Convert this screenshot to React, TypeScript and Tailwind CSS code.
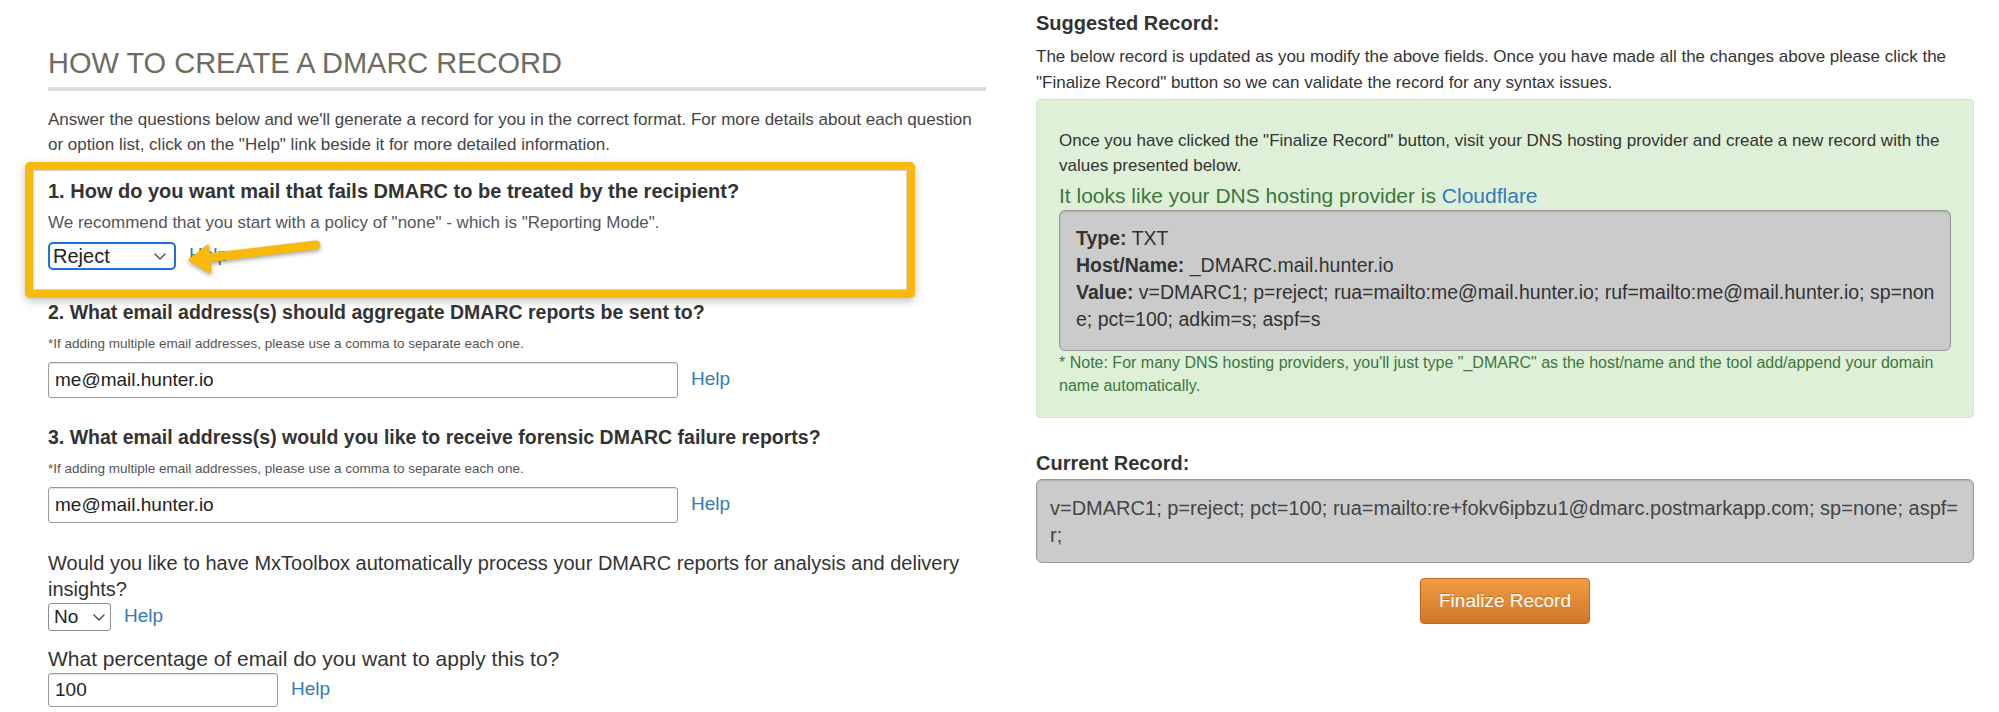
import React from "react";

function Chevron() {
  return (
    <svg width="12" height="7" viewBox="0 0 12 7" fill="none" className="shrink-0">
      <polyline points="1,1 6,6 11,1" stroke="#444" strokeWidth="1.3" strokeLinecap="round" strokeLinejoin="round" />
    </svg>
  );
}

function HelpLink() {
  return <a className="-mt-[3px] text-[19px] leading-[24px] text-[#337ab7] cursor-pointer">Help</a>;
}

function TextField({ value, width }: { value: string; width: string }) {
  return (
    <input
      readOnly
      defaultValue={value}
      className={`${width} rounded-[3px] border border-[#9c9c9c] bg-white px-[6px] text-[19px] text-[#222] outline-none shadow-[inset_0_1px_1px_rgba(0,0,0,0.12)]`}
    />
  );
}

function Question({ children }: { children: React.ReactNode }) {
  return <h3 className="text-[19.5px] font-bold leading-[26px] text-[#333]">{children}</h3>;
}

function Hint() {
  return (
    <p className="mt-[10px] text-[13.5px] leading-[18px] text-[#555]">
      *If adding multiple email addresses, please use a comma to separate each one.
    </p>
  );
}

export default function App() {
  return (
    <div className="relative min-h-[712px] w-[1999px] bg-white font-['Liberation_Sans',Arial,sans-serif] text-[#333]">
      <div className="flex gap-[50px] pl-[48px] pr-[25px]">
        {/* left: the form */}
        <div className="w-[938px] pt-[46px]">
          <h1 className="text-[29px] leading-[35px] uppercase text-[#6e6c5f]">How to create a DMARC record</h1>
          <div className="mt-[6px] h-[4px] bg-[#dddddd]" />
          <p className="mt-[16px] text-[17px] leading-[25px] text-[#444]">
            Answer the questions below and we'll generate a record for you in the correct format. For more details about each question or option list, click on the "Help" link beside it for more detailed information.
          </p>

          <div className="mt-[5px] -ml-[23px] w-[890px] rounded-[5px] border-[8px] border-[#f9b90b] bg-white pl-[15px] pt-[8px] pb-[20px] shadow-[0_3px_8px_rgba(0,0,0,0.25),inset_0_0_0_1px_#d4d4d4]">
            <h3 className="text-[20px] font-bold leading-[26px] text-[#333]">
              1. How do you want mail that fails DMARC to be treated by the recipient?
            </h3>
            <p className="mt-[8px] text-[17px] leading-[22px] text-[#555]">
              We recommend that you start with a policy of "none" - which is "Reporting Mode".
            </p>
            <div className="mt-[8px] flex items-center gap-[13px]">
              <div className="flex h-[28px] w-[128px] items-center justify-between rounded-[5px] border-2 border-[#1d6fe0] bg-white pl-[3px] pr-[8px] text-[20px] text-[#222]">
                Reject
                <Chevron />
              </div>
              <HelpLink />
            </div>
          </div>

          <div className="mt-[1px]">
            <Question>2. What email address(s) should aggregate DMARC reports be sent to?</Question>
            <Hint />
            <div className="mt-[9px] flex items-center gap-[13px]">
              <TextField value="me@mail.hunter.io" width="w-[630px] h-[36px]" />
              <HelpLink />
            </div>
          </div>

          <div className="mt-[26px]">
            <Question>3. What email address(s) would you like to receive forensic DMARC failure reports?</Question>
            <Hint />
            <div className="mt-[9px] flex items-center gap-[13px]">
              <TextField value="me@mail.hunter.io" width="w-[630px] h-[36px]" />
              <HelpLink />
            </div>
          </div>

          <p className="mt-[27px] text-[20px] leading-[26px] text-[#333]">
            Would you like to have MxToolbox automatically process your DMARC reports for analysis and delivery insights?
          </p>
          <div className="mt-[1px] flex items-center gap-[13px]">
            <div className="flex h-[28px] w-[63px] items-center justify-between rounded-[3px] border border-[#8e8e8e] bg-white pl-[5px] pr-[5px] text-[19px] text-[#222]">
              No
              <Chevron />
            </div>
            <HelpLink />
          </div>

          <p className="mt-[15px] text-[21px] leading-[26px] text-[#333]">What percentage of email do you want to apply this to?</p>
          <div className="mt-[1px] flex items-center gap-[13px]">
            <TextField value="100" width="w-[230px] h-[34px]" />
            <HelpLink />
          </div>
        </div>

        {/* right: the generated record */}
        <div className="w-[938px] pt-[11px]">
          <h2 className="text-[20px] font-bold leading-[24px] text-[#333]">Suggested Record:</h2>
          <p className="mt-[9px] text-[17px] leading-[26px] text-[#333]">
            The below record is updated as you modify the above fields. Once you have made all the changes above please click the "Finalize Record" button so we can validate the record for any syntax issues.
          </p>

          <div className="mt-[3px] rounded-[4px] border border-[#d2e7c6] bg-[#dff0d8] px-[22px] pt-[28px] pb-[20px]">
            <p className="text-[17px] leading-[25px] text-[#333]">
              Once you have clicked the "Finalize Record" button, visit your DNS hosting provider and create a new record with the values presented below.
            </p>
            <p className="mt-[5px] text-[21px] leading-[26px] text-[#3c763d]">
              It looks like your DNS hosting provider is <a className="text-[#337ab7]">Cloudflare</a>
            </p>
            <div className="mt-[1px] rounded-[6px] border border-[#999] bg-[#cbcbcb] px-[16px] pt-[14px] pb-[17px] text-[19.5px] leading-[27px] text-[#333] shadow-[inset_0_1px_2px_rgba(0,0,0,0.15)]">
              <div><b>Type:</b> TXT</div>
              <div><b>Host/Name:</b> _DMARC.mail.hunter.io</div>
              <div className="whitespace-nowrap">
                <b>Value:</b> v=DMARC1; p=reject; rua=mailto:me@mail.hunter.io; ruf=mailto:me@mail.hunter.io; sp=non
                <br />
                e; pct=100; adkim=s; aspf=s
              </div>
            </div>
            <p className="whitespace-nowrap text-[16px] leading-[23px] text-[#3c763d]">
              * Note: For many DNS hosting providers, you'll just type "_DMARC" as the host/name and the tool add/append your domain
              <br />
              name automatically.
            </p>
          </div>

          <h2 className="mt-[33px] text-[20px] font-bold leading-[24px] text-[#333]">Current Record:</h2>
          <div className="mt-[4px] whitespace-nowrap rounded-[6px] border border-[#999] bg-[#cbcbcb] pl-[13px] pr-[6px] pt-[15px] pb-[13px] text-[20px] leading-[27px] text-[#444] shadow-[inset_0_1px_2px_rgba(0,0,0,0.15)]">
            v=DMARC1; p=reject; pct=100; rua=mailto:re+fokv6ipbzu1@dmarc.postmarkapp.com; sp=none; aspf=
            <br />
            r;
          </div>

          <button className="mx-auto mt-[15px] block h-[46px] w-[170px] rounded-[4px] border border-[#c0691f] bg-linear-to-b from-[#f29c40] to-[#d0772a] text-[19px] text-white [text-shadow:0_-1px_0_rgba(0,0,0,0.2)]">
            Finalize Record
          </button>
        </div>
      </div>

      {/* annotation arrow pointing at the policy select */}
      <svg
        className="pointer-events-none absolute left-[180px] top-[234px] drop-shadow-[0_2px_2px_rgba(0,0,0,0.35)]"
        width="150"
        height="42"
        viewBox="0 0 150 42"
      >
        <line x1="27" y1="24" x2="136" y2="11" stroke="#f9b90b" strokeWidth="9" strokeLinecap="round" />
        <polygon points="10,26 28,12 30,38" fill="#f9b90b" stroke="#f9b90b" strokeWidth="3" strokeLinejoin="round" />
      </svg>
    </div>
  );
}
